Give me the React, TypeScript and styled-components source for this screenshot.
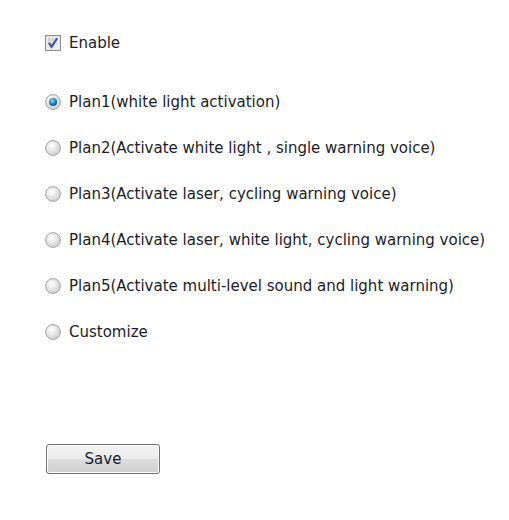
import styled, { createGlobalStyle } from "styled-components";

const GlobalStyle = createGlobalStyle`
    html, body {
        margin: 0;
        padding: 0;
        background: #ffffff;
    }
`

const plans = [
    "Plan1(white light activation)",
    "Plan2(Activate white light , single warning voice)",
    "Plan3(Activate laser, cycling warning voice)",
    "Plan4(Activate laser, white light, cycling warning voice)",
    "Plan5(Activate multi-level sound and light warning)",
    "Customize",
]

const CheckMark = () => (
    <svg width="16" height="16" viewBox="0 0 13 13">
        <defs>
            <linearGradient id="cb" x1="0" y1="0" x2="1" y2="1">
                <stop offset="0" stopColor="#cfcfcf"/>
                <stop offset="1" stopColor="#f2f2f2"/>
            </linearGradient>
        </defs>
        <rect x="0.5" y="0.5" width="12" height="12" fill="#ffffff" stroke="#8e8f8f"/>
        <rect x="2" y="2" width="9" height="9" fill="url(#cb)"/>
        <path d="M3.2 6.3 L5.3 9.6 L9.9 2.6" fill="none" stroke="#3b4fa6" strokeWidth="1.7"/>
    </svg>
)

const RadioMark = (props: { checked: boolean }) => (
    <svg width="16" height="16" viewBox="0 0 13 13">
        <defs>
            <radialGradient id="rb" cx="0.4" cy="0.35" r="0.7">
                <stop offset="0" stopColor="#ffffff"/>
                <stop offset="1" stopColor="#cdcdcd"/>
            </radialGradient>
            <radialGradient id="rd" cx="0.4" cy="0.35" r="0.7">
                <stop offset="0" stopColor="#8ad8f5"/>
                <stop offset="0.6" stopColor="#1c84b8"/>
                <stop offset="1" stopColor="#0b4a78"/>
            </radialGradient>
        </defs>
        <circle cx="6.5" cy="6.5" r="6" fill="url(#rb)" stroke="#a0a0a0" strokeWidth="0.8"/>
        {props.checked && <circle cx="6.5" cy="6.5" r="3.3" fill="url(#rd)"/>}
    </svg>
)

export default function App() {
    return (
        <Page>
            <GlobalStyle/>
            <OptionRow>
                <CheckMark/>
                <Label>Enable</Label>
            </OptionRow>
            <PlanList>
                {plans.map((plan, index) => (
                    <OptionRow key={index}>
                        <RadioMark checked={index === 0}/>
                        <Label>{plan}</Label>
                    </OptionRow>
                ))}
            </PlanList>
            <SaveButton>Save</SaveButton>
        </Page>
    )
}

const Page = styled.div`
    width: 509px;
    height: 520px;
    box-sizing: border-box;
    padding: 35px 0 0 45px;
    display: flex;
    flex-direction: column;
    align-items: flex-start;
    font-family: "DejaVu Sans", Tahoma, sans-serif;
    font-size: 15px;
    color: #1c1c2a;
`

const PlanList = styled.div`
    display: flex;
    flex-direction: column;
    gap: 30px;
    margin-top: 43px;
`

const OptionRow = styled.div`
    display: flex;
    align-items: center;
    gap: 8px;
    height: 16px;
`

const Label = styled.span`
    line-height: 16px;
    white-space: nowrap;
`

const SaveButton = styled.button`
    margin: 104px 0 0 1px;
    width: 114px;
    height: 30px;
    border: 1px solid #707070;
    border-radius: 3px;
    background: linear-gradient(to bottom, #f2f2f2 0%, #ebebeb 50%, #dddddd 51%, #cfcfcf 100%);
    box-shadow: inset 0 0 0 1px #fcfcfc;
    font-family: "DejaVu Sans", Tahoma, sans-serif;
    font-size: 15px;
    color: #1c1c2a;
    padding: 0;
`
